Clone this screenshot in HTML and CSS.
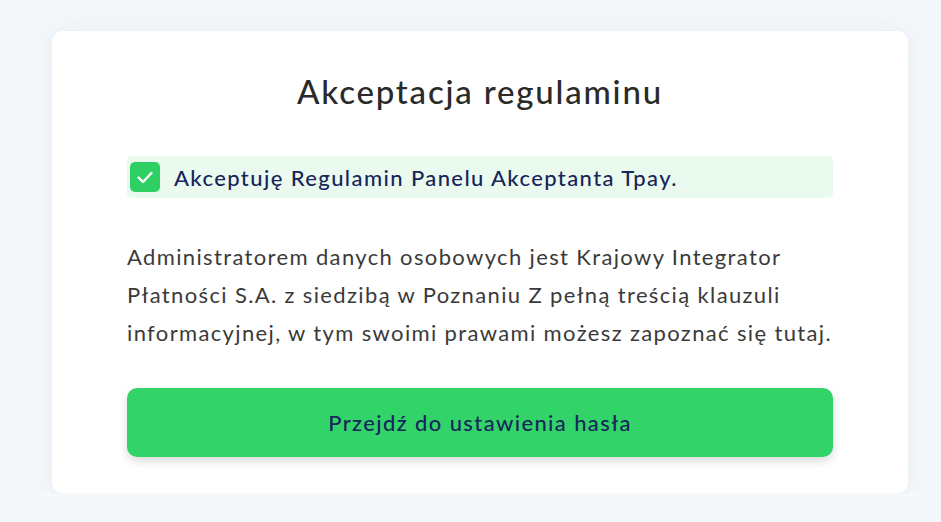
FILE: index.html
```html
<!DOCTYPE html>
<html lang="pl">
<head>
<meta charset="utf-8">
<title>Akceptacja regulaminu</title>
<link rel="stylesheet" href="styles.css">
</head>
<body>
<main class="card">
  <h1 class="title">Akceptacja regulaminu</h1>
  <label class="consent">
    <span class="box">
      <svg viewBox="0 0 30 30" width="30" height="30"><path d="M8.5 15.5l4.5 4.5 8.5-9" fill="none" stroke="#fff" stroke-width="2.4" stroke-linecap="round" stroke-linejoin="round"/></svg>
    </span>
    <span class="consent-text">Akceptuję Regulamin Panelu Akceptanta Tpay.</span>
  </label>
  <p class="info">Administratorem danych osobowych jest Krajowy Integrator Płatności S.A. z siedzibą w Poznaniu Z pełną treścią klauzuli informacyjnej, w tym swoimi prawami możesz zapoznać się tutaj.</p>
  <button class="btn">Przejdź do ustawienia hasła</button>
</main>
</body>
</html>
```

FILE: styles.css
```css
html, body {
  margin: 0;
  padding: 0;
  background: #f4f8fb;
  font-family: Lato, "Open Sans", sans-serif;
}
body {
  padding: 31px 0 0 52px;
}
.card {
  box-sizing: border-box;
  width: 856px;
  height: 462px;
  background: #fff;
  border-radius: 11px;
  box-shadow: 0 0 24px rgba(200, 215, 230, 0.35);
  padding: 41px 75px 0 75px;
  display: flex;
  flex-direction: column;
}
.title {
  margin: 0;
  font-size: 33px;
  font-weight: 500;
  letter-spacing: 1.8px;
  line-height: 38px;
  color: #2a2a2a;
  text-align: center;
}
.consent {
  margin-top: 46px;
  height: 42px;
  box-sizing: border-box;
  background: #ebfaef;
  border-radius: 5px;
  display: flex;
  align-items: center;
  padding-left: 3px;
  gap: 14px;
}
.box {
  flex: none;
  width: 30px;
  height: 30px;
  border-radius: 5px;
  background: #2ecf63;
  display: flex;
  align-items: center;
  justify-content: center;
}
.consent-text {
  font-size: 22px;
  letter-spacing: 1.4px;
  color: #16255a;
  font-weight: 500;
}
.info {
  margin: 40px 0 0 0;
  font-size: 22px;
  letter-spacing: 1.36px;
  line-height: 38px;
  color: #3a3a3a;
}
.btn {
  margin-top: 36px;
  height: 69px;
  flex: none;
  border: none;
  border-radius: 10px;
  background: #32d46a;
  box-shadow: 0 4px 10px rgba(0, 0, 0, 0.15);
  font-family: inherit;
  font-size: 22px;
  font-weight: 500;
  letter-spacing: 1.38px;
  color: #17265a;
  cursor: pointer;
}
```
